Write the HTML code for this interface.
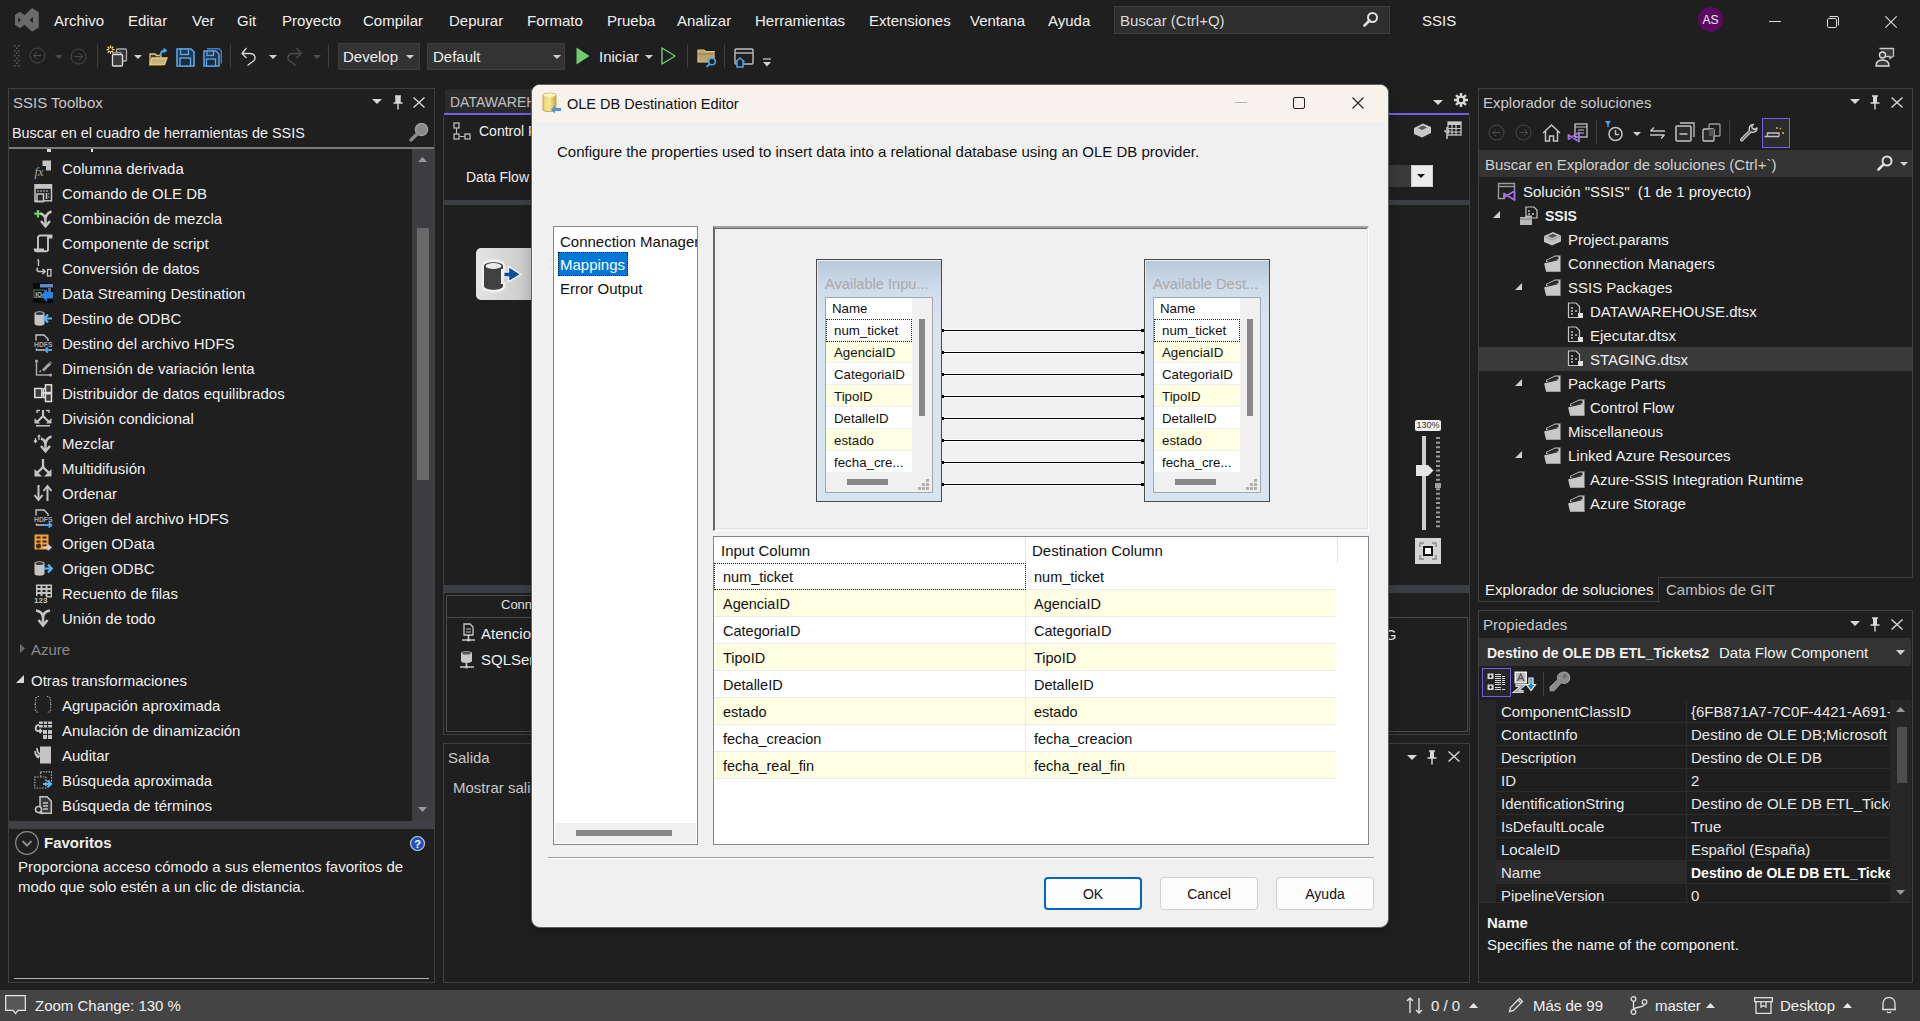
<!DOCTYPE html>
<html><head><meta charset="utf-8">
<style>
*{box-sizing:border-box;margin:0;padding:0}
html,body{width:1920px;height:1021px;overflow:hidden;background:#1f1f1f;font-family:"Liberation Sans",sans-serif;color:#f0f0f0}
.a{position:absolute;white-space:nowrap}
.t15{font-size:15px;line-height:18px}
.t14{font-size:14px;line-height:17px}
.w{color:#f0f0f0}
.g{color:#c8c8c8}
svg{position:absolute;overflow:visible}
</style></head><body>
<!-- ============ MENU BAR ============ -->
<svg style="left:0;top:0" width="44" height="40" viewBox="0 0 44 40"><path d="M15 15 L20 11.7 L24.6 15.3 L32.1 8.1 L38.8 12.2 V27.5 L32.1 31.7 L24.6 24.8 L20 28.3 L15 24.8 Z M18.3 17.2 L20.8 20 L18.3 22.8 Z M32.9 16.9 L29.6 20 L32.9 23.1 Z" fill="#6a6a6a" fill-rule="evenodd"/></svg>
<div id="menu">
<div class="a t15 w" style="left:54px;top:12px">Archivo</div>
<div class="a t15 w" style="left:128px;top:12px">Editar</div>
<div class="a t15 w" style="left:192px;top:12px">Ver</div>
<div class="a t15 w" style="left:237px;top:12px">Git</div>
<div class="a t15 w" style="left:282px;top:12px">Proyecto</div>
<div class="a t15 w" style="left:363px;top:12px">Compilar</div>
<div class="a t15 w" style="left:449px;top:12px">Depurar</div>
<div class="a t15 w" style="left:527px;top:12px">Formato</div>
<div class="a t15 w" style="left:607px;top:12px">Prueba</div>
<div class="a t15 w" style="left:677px;top:12px">Analizar</div>
<div class="a t15 w" style="left:755px;top:12px">Herramientas</div>
<div class="a t15 w" style="left:869px;top:12px">Extensiones</div>
<div class="a t15 w" style="left:970px;top:12px">Ventana</div>
<div class="a t15 w" style="left:1048px;top:12px">Ayuda</div>
</div>
<div class="a" style="left:1114px;top:6px;width:276px;height:28px;background:#2e2e2e;border:1px solid #3d3d3d"></div>
<div class="a t15" style="left:1120px;top:12px;color:#dcdcdc">Buscar (Ctrl+Q)</div>
<svg style="left:1363px;top:11px" width="16" height="16" viewBox="0 0 16 16"><circle cx="9.5" cy="6.5" r="4.5" fill="none" stroke="#e0e0e0" stroke-width="2"/><path d="M6.5 9.5 L1.5 14.5" stroke="#e0e0e0" stroke-width="2.6" stroke-linecap="round"/></svg>
<div class="a t15 w" style="left:1422px;top:12px">SSIS</div>
<div class="a" style="left:1698px;top:7px;width:25px;height:25px;border-radius:50%;background:#5a0b60"></div>
<div class="a" style="left:1698px;top:13px;width:25px;text-align:center;font-size:12px;line-height:14px;color:#f0f0f0">AS</div>
<div class="a" style="left:1769px;top:21px;width:12px;height:1px;background:#e0e0e0"></div>
<svg style="left:1826px;top:15px" width="14" height="14" viewBox="0 0 14 14"><rect x="1.5" y="3.5" width="9" height="9" rx="1.2" fill="none" stroke="#e0e0e0" stroke-width="1"/><path d="M3.5 1.5 H11 A1.5 1.5 0 0 1 12.5 3 V10.5" fill="none" stroke="#e0e0e0" stroke-width="1"/></svg>
<svg style="left:1885px;top:16px" width="12" height="12" viewBox="0 0 12 12"><path d="M0.3 0.3 L11.7 11.7 M11.7 0.3 L0.3 11.7" stroke="#e0e0e0" stroke-width="1.1"/></svg>


<!-- ============ TOOLBAR ============ -->
<svg style="left:13px;top:45px" width="8" height="23" viewBox="0 0 8 23"><g fill="#5a5a5a"><rect x="1" y="0" width="1.5" height="1.5"/><rect x="5" y="0" width="1.5" height="1.5"/><rect x="3" y="2.5" width="1.5" height="1.5"/><rect x="1" y="5" width="1.5" height="1.5"/><rect x="5" y="5" width="1.5" height="1.5"/><rect x="3" y="7.5" width="1.5" height="1.5"/><rect x="1" y="10" width="1.5" height="1.5"/><rect x="5" y="10" width="1.5" height="1.5"/><rect x="3" y="12.5" width="1.5" height="1.5"/><rect x="1" y="15" width="1.5" height="1.5"/><rect x="5" y="15" width="1.5" height="1.5"/><rect x="3" y="17.5" width="1.5" height="1.5"/><rect x="1" y="20" width="1.5" height="1.5"/><rect x="5" y="20" width="1.5" height="1.5"/></g></svg>
<svg style="left:29px;top:47px" width="17" height="17" viewBox="0 0 17 17"><circle cx="8.5" cy="8.5" r="7.5" fill="none" stroke="#4a4a4a" stroke-width="1"/><path d="M12.5 8.5 H4.5 M8 5 L4.5 8.5 L8 12" fill="none" stroke="#4a4a4a" stroke-width="1"/></svg>
<svg style="left:55px;top:55px" width="8" height="4" viewBox="0 0 8 4"><path d="M0 0 H8 L4 4 Z" fill="#4a4a4a"/></svg>
<svg style="left:70px;top:48px" width="17" height="17" viewBox="0 0 17 17"><circle cx="8.5" cy="8.5" r="7.5" fill="none" stroke="#4a4a4a" stroke-width="1"/><path d="M4.5 8.5 H12.5 M9 5 L12.5 8.5 L9 12" fill="none" stroke="#4a4a4a" stroke-width="1"/></svg>
<div class="a" style="left:97px;top:44px;width:1px;height:24px;background:#3d3d3d"></div>
<svg style="left:106px;top:45px" width="22" height="22" viewBox="0 0 22 22"><g stroke="#ecd48c" stroke-width="1.3"><path d="M4.5 0.5 V9 M0.5 4.7 H8.5 M1.7 1.7 L7.3 7.7 M7.3 1.7 L1.7 7.7"/></g><circle cx="4.5" cy="4.7" r="1.6" fill="#1f1f1f"/><rect x="10.5" y="4" width="10" height="12" rx="1" fill="#333" stroke="#aaa" stroke-width="1.3"/><rect x="7" y="7.5" width="8" height="10" fill="none" stroke="#999" stroke-width="1.3"/><rect x="6.5" y="9.5" width="10" height="11.5" rx="1" fill="#3a3a3a" stroke="#ddd" stroke-width="1.3"/></svg>
<svg style="left:134px;top:55px" width="8" height="4" viewBox="0 0 8 4"><path d="M0 0 H8 L4 4 Z" fill="#d0d0d0"/></svg>
<svg style="left:149px;top:47px" width="19" height="19" viewBox="0 0 19 19"><path d="M1 7 H6 L7.5 8.5 H12 V17.5 H1 Z" fill="#3c3a30" stroke="#e5c97e" stroke-width="1.3"/><path d="M3 11 H18 L15.5 17.5 H1 Z" fill="#c9b27a" stroke="#e5c97e" stroke-width="1.3"/><path d="M11.5 9 C11.5 5 13 3.5 16 3.5" fill="none" stroke="#4ea3ea" stroke-width="1.8"/><path d="M14.5 0.5 L18.5 3.5 L14.5 6.5 Z" fill="#4ea3ea"/></svg>
<svg style="left:176px;top:48px" width="19" height="19" viewBox="0 0 19 19"><path d="M1 1 H15 L18 4 V18 H1 Z" fill="#243445" stroke="#57a5ee" stroke-width="1.6"/><rect x="4.5" y="1" width="8" height="5.5" fill="#2a3a4a" stroke="#57a5ee" stroke-width="1.4"/><rect x="4" y="10" width="10.5" height="8" fill="#1f2a36" stroke="#57a5ee" stroke-width="1.4"/></svg>
<svg style="left:203px;top:48px" width="19" height="19" viewBox="0 0 19 19"><path d="M4 0.7 H16 L18.3 3 V15.5" fill="none" stroke="#3f7fc0" stroke-width="1.5"/><path d="M1 3 H13 L16 6 V18 H1 Z" fill="#243445" stroke="#57a5ee" stroke-width="1.5"/><rect x="4" y="3" width="6.5" height="4.5" fill="#2a3a4a" stroke="#57a5ee" stroke-width="1.3"/><rect x="3.5" y="11" width="9" height="7" fill="#1f2a36" stroke="#57a5ee" stroke-width="1.3"/></svg>
<div class="a" style="left:230px;top:44px;width:1px;height:24px;background:#3d3d3d"></div>
<svg style="left:241px;top:47px" width="17" height="19" viewBox="0 0 17 19"><path d="M1.5 6.5 H9 C14 6.5 15.5 11 12.5 14 L6.5 18.5" fill="none" stroke="#d8d8d8" stroke-width="1.3"/><path d="M5.5 1 L1 6.5 L5.5 11" fill="none" stroke="#d8d8d8" stroke-width="1.3"/></svg>
<svg style="left:269px;top:55px" width="8" height="4" viewBox="0 0 8 4"><path d="M0 0 H8 L4 4 Z" fill="#d0d0d0"/></svg>
<svg style="left:285px;top:47px" width="17" height="19" viewBox="0 0 17 19"><path d="M15.5 6.5 H8 C3 6.5 1.5 11 4.5 14 L10.5 18.5" fill="none" stroke="#4e4e4e" stroke-width="1.3"/><path d="M11.5 1 L16 6.5 L11.5 11" fill="none" stroke="#4e4e4e" stroke-width="1.3"/></svg>
<svg style="left:313px;top:55px" width="8" height="4" viewBox="0 0 8 4"><path d="M0 0 H8 L4 4 Z" fill="#4e4e4e"/></svg>
<div class="a" style="left:328px;top:44px;width:1px;height:24px;background:#3d3d3d"></div>
<div class="a" style="left:338px;top:43px;width:82px;height:27px;background:#333333;border:1px solid #3c3c3c"></div>
<div class="a t15 w" style="left:343px;top:48px">Develop</div>
<svg style="left:406px;top:55px" width="8" height="4" viewBox="0 0 8 4"><path d="M0 0 H8 L4 4 Z" fill="#d0d0d0"/></svg>
<div class="a" style="left:427px;top:43px;width:138px;height:27px;background:#333333;border:1px solid #3c3c3c"></div>
<div class="a t15 w" style="left:433px;top:48px">Default</div>
<svg style="left:553px;top:55px" width="8" height="4" viewBox="0 0 8 4"><path d="M0 0 H8 L4 4 Z" fill="#d0d0d0"/></svg>
<svg style="left:576px;top:47px" width="14" height="18" viewBox="0 0 14 18"><path d="M0.5 0.5 L13.5 9 L0.5 17.5 Z" fill="#6bcf6b"/></svg>
<div class="a t15 w" style="left:599px;top:48px">Iniciar</div>
<svg style="left:645px;top:55px" width="8" height="4" viewBox="0 0 8 4"><path d="M0 0 H8 L4 4 Z" fill="#d0d0d0"/></svg>
<svg style="left:661px;top:47px" width="15" height="18" viewBox="0 0 15 18"><path d="M1 1 L14 9 L1 17 Z" fill="none" stroke="#6bcf6b" stroke-width="1.4" stroke-linejoin="round"/></svg>
<div class="a" style="left:687px;top:44px;width:1px;height:24px;background:#3d3d3d"></div>
<svg style="left:697px;top:48px" width="21" height="20" viewBox="0 0 21 20"><path d="M1 2 H7 L8.5 3.5 H17 V14 H1 Z" fill="#b9a46c" stroke="#e5c97e" stroke-width="1.2"/><path d="M1 6 H17" stroke="#8c7a4a" stroke-width="1"/><circle cx="15" cy="13.5" r="3.3" fill="#1f1f1f" stroke="#4ea3ea" stroke-width="1.6"/><path d="M12.8 15.8 L9.5 19" stroke="#4ea3ea" stroke-width="1.8"/></svg>
<div class="a" style="left:724px;top:44px;width:1px;height:24px;background:#3d3d3d"></div>
<svg style="left:734px;top:48px" width="20" height="20" viewBox="0 0 20 20"><rect x="1" y="1" width="18" height="15" rx="1" fill="none" stroke="#bdbdbd" stroke-width="1.4"/><path d="M1 5 H19" stroke="#bdbdbd" stroke-width="1.4"/><path d="M1.5 14 L6 10 L10.5 14 M3 13 V19 H9 V13" fill="#1f1f1f" stroke="#4ea3ea" stroke-width="1.5"/></svg>
<svg style="left:762px;top:58px" width="10" height="9" viewBox="0 0 10 9"><path d="M1 1 H9" stroke="#d0d0d0" stroke-width="1.2"/><path d="M1 4 H9 L5 8.5 Z" fill="#d0d0d0"/></svg>
<svg style="left:1875px;top:47px" width="20" height="20" viewBox="0 0 20 20"><path d="M4.5 1.5 H18.5 V9 L15 11.5 V9.5 H10" fill="#3a3a3a" stroke="#c8c8c8" stroke-width="1.3"/><path d="M7.5 11 A3 3 0 1 0 7.5 5 A3 3 0 1 0 7.5 11 Z" fill="#3a3a3a" stroke="#e0e0e0" stroke-width="1.3"/><path d="M1 19 C1 15 3.5 13 7.5 13 C11.5 13 14 15 14 19 Z" fill="#3a3a3a" stroke="#e0e0e0" stroke-width="1.3"/></svg>


<!-- ============ LEFT PANEL ============ -->
<div class="a" style="left:8px;top:88px;width:427px;height:895px;border:1px solid #3f3f3f"></div>
<div class="a t15" style="left:13px;top:94px;color:#c8c8c8">SSIS Toolbox</div>
<svg style="left:372px;top:99px" width="10" height="5" viewBox="0 0 10 5"><path d="M0 0 H10 L5 5 Z" fill="#d8d8d8"/></svg>
<svg style="left:393px;top:95px" width="10" height="15" viewBox="0 0 10 15"><path d="M2 1 H8 M3 1 V7.5 M7 1 V7.5 M0.5 8 H9.5 M5 8 V14.5" fill="none" stroke="#d8d8d8" stroke-width="1.4"/><rect x="3" y="1" width="4" height="7" fill="#d8d8d8"/></svg>
<svg style="left:413px;top:97px" width="12" height="11" viewBox="0 0 12 11"><path d="M0.5 0.5 L11.5 10.5 M11.5 0.5 L0.5 10.5" stroke="#d8d8d8" stroke-width="1.4"/></svg>
<div class="a t15 w" style="left:12px;top:124px;font-size:14.4px">Buscar en el cuadro de herramientas de SSIS</div>
<svg style="left:409px;top:122px" width="20" height="20" viewBox="0 0 20 20"><circle cx="12.5" cy="7.5" r="6" fill="#8a8a8a" stroke="#9c9c9c" stroke-width="1.6"/><path d="M8 12 L2 18" stroke="#8a8a8a" stroke-width="3.4" stroke-linecap="round"/></svg>
<div class="a" style="left:9px;top:147px;width:425px;height:2px;background:#7a7a7a"></div>
<div class="a" style="left:412px;top:149px;width:22px;height:672px;background:#3e3e42"></div>
<div class="a" style="left:417px;top:228px;width:12px;height:252px;background:#686868"></div>
<svg style="left:418px;top:157px" width="9" height="5" viewBox="0 0 9 5"><path d="M0 5 L4.5 0 L9 5 Z" fill="#9a9a9a"/></svg>
<svg style="left:418px;top:807px" width="9" height="5" viewBox="0 0 9 5"><path d="M0 0 L4.5 5 L9 0 Z" fill="#9a9a9a"/></svg>
<div class="a" style="left:47px;top:149px;width:4px;height:3px;background:#d8d8d8"></div><div class="a" style="left:91px;top:149px;width:2px;height:3px;background:#e8e8e8"></div>
<svg style="left:34px;top:159px" width="18" height="18" viewBox="0 0 18 18"><path d="M8.5 1.5 H17 V11.5 H12 V7 H8.5 Z" fill="#c4c4c4"/><text x="0.5" y="17" font-family="Liberation Serif" font-style="italic" font-size="12.5" fill="#a8a8a8">fx</text></svg>
<div class="a t15 w" style="left:62px;top:160px">Columna derivada</div>
<svg style="left:34px;top:184px" width="18" height="18" viewBox="0 0 18 18"><rect x="1" y="0.8" width="16.5" height="16" fill="#262626" stroke="#c4c4c4" stroke-width="1.5"/><rect x="1" y="0.8" width="16.5" height="4" fill="#c4c4c4"/><path d="M3 7 H15" stroke="#c4c4c4" stroke-width="1.2" stroke-dasharray="2 1"/><path d="M12.5 9 V15 M14.5 9.5 V10.5 M14.5 12.5 V13.5" stroke="#c4c4c4" stroke-width="1.4"/><path d="M3 17.5 V10 H9.5 V17.5 Z" fill="#262626" stroke="#c4c4c4" stroke-width="1.5"/><path d="M0.5 17.5 H9.5" stroke="#c4c4c4" stroke-width="1.6"/></svg>
<div class="a t15 w" style="left:62px;top:185px">Comando de OLE DB</div>
<svg style="left:34px;top:209px" width="18" height="18" viewBox="0 0 18 18"><path d="M4 1 V8.5 M0.3 4.7 H7.7" stroke="#6fd36f" stroke-width="2.2"/><path d="M6.5 4.5 C8 5 11.5 7 11.5 11 M17.5 2.5 C16 3 11.5 5 11.5 11 V16.5" fill="none" stroke="#c4c4c4" stroke-width="2.4"/><path d="M7 12 L11.5 17.3 L16 12" fill="none" stroke="#c4c4c4" stroke-width="2.4"/></svg>
<div class="a t15 w" style="left:62px;top:210px">Combinación de mezcla</div>
<svg style="left:34px;top:234px" width="18" height="18" viewBox="0 0 18 18"><path d="M4 15.5 V3.5 C4 2 5 1.5 6.5 1.5 H17.5 V3.5 H14" fill="none" stroke="#c4c4c4" stroke-width="1.9"/><path d="M14 2 V15.5 C14 16.7 13.3 17.3 12 17.3 H2.5 C1.3 17.3 0.8 16.5 0.8 15.5 H10" fill="none" stroke="#c4c4c4" stroke-width="1.9"/></svg>
<div class="a t15 w" style="left:62px;top:235px">Componente de script</div>
<svg style="left:34px;top:259px" width="18" height="18" viewBox="0 0 18 18"><path d="M4.5 0.5 V7" stroke="#c4c4c4" stroke-width="1.4"/><path d="M3.5 1.5 L4.5 0.5" stroke="#c4c4c4" stroke-width="1.2"/><path d="M4 9 C2.5 10 2.5 12.5 5 12.5 H11 M8.5 10 L11 12.5 L8.5 15" fill="none" stroke="#c4c4c4" stroke-width="1.6"/><rect x="13.5" y="10.5" width="3.5" height="6.5" fill="none" stroke="#c4c4c4" stroke-width="1.3"/></svg>
<div class="a t15 w" style="left:62px;top:260px">Conversión de datos</div>
<svg style="left:34px;top:284px" width="18" height="18" viewBox="0 0 18 18"><rect x="-1" y="-1" width="20" height="20" fill="#0a0a0a"/><rect x="6" y="0" width="13" height="3.5" fill="#5d8ad0"/><rect x="0" y="6" width="11" height="7.5" fill="none" stroke="#4f7a6a" stroke-width="1"/><text x="1.3" y="12.5" font-size="6.5" font-weight="bold" fill="#c4c4c4" font-family="Liberation Sans">IO</text><rect x="14" y="4" width="3" height="4" fill="#666"/><path d="M19 8 H13 V5 L7 11.5 L13 18 V14.5 H19 Z" fill="#2f7fe8"/></svg>
<div class="a t15 w" style="left:62px;top:285px">Data Streaming Destination</div>
<svg style="left:34px;top:309px" width="18" height="18" viewBox="0 0 18 18"><path d="M0.5 4.5 C0.5 1.5 10.5 1.5 10.5 4.5 V14.5 C10.5 17.5 0.5 17.5 0.5 14.5 Z" fill="#c4c4c4"/><ellipse cx="5.5" cy="4.5" rx="4" ry="1.6" fill="#3a3a3a"/><path d="M18 9.5 H10.5 M14 5.5 L10.2 9.5 L14 13.5" fill="none" stroke="#5cb3f5" stroke-width="2.2"/></svg>
<div class="a t15 w" style="left:62px;top:310px">Destino de ODBC</div>
<svg style="left:34px;top:334px" width="18" height="18" viewBox="0 0 18 18"><path d="M2 6.5 V1 H10 L14 5 V7" fill="none" stroke="#c4c4c4" stroke-width="1.4"/><text x="0" y="13" font-size="6.8" font-weight="bold" fill="#a8a8a8" font-family="Liberation Sans">HDFS</text><path d="M2.5 14.5 V16 H11" stroke="#c4c4c4" stroke-width="1.4" fill="none"/><path d="M18 16 H11 M13.8 13.3 L11 16 L13.8 18.7" fill="none" stroke="#4ea3ea" stroke-width="1.8"/></svg>
<div class="a t15 w" style="left:62px;top:335px">Destino del archivo HDFS</div>
<svg style="left:34px;top:359px" width="18" height="18" viewBox="0 0 18 18"><path d="M2.5 2 V16 H17" fill="none" stroke="#a8a8a8" stroke-width="1.5"/><circle cx="2.5" cy="2" r="1.6" fill="#a8a8a8"/><circle cx="16.5" cy="16" r="1.6" fill="#a8a8a8"/><path d="M5.5 13 L7 11.5" stroke="#a8a8a8" stroke-width="1.5"/><path d="M8 10.5 L15 3.5 L17 5.5 L10 12.5 Z" fill="#a8a8a8"/><path d="M15.5 3 L16.3 2.2 L18 3.9 L17.3 4.7 Z" fill="#a8a8a8"/></svg>
<div class="a t15 w" style="left:62px;top:360px">Dimensión de variación lenta</div>
<svg style="left:34px;top:384px" width="18" height="18" viewBox="0 0 18 18"><rect x="0.8" y="4.5" width="7" height="9" fill="#3a3a3a" stroke="#e0e0e0" stroke-width="1.5"/><rect x="11.5" y="0.8" width="6" height="7.7" fill="#3a3a3a" stroke="#e0e0e0" stroke-width="1.5"/><rect x="11.5" y="9.8" width="6" height="7.7" fill="#3a3a3a" stroke="#e0e0e0" stroke-width="1.5"/><path d="M7.8 9 H11.5 M9.5 4.5 V13.5 H11.5 M9.5 4.5 H11.5" fill="none" stroke="#e0e0e0" stroke-width="1.5"/></svg>
<div class="a t15 w" style="left:62px;top:385px">Distribuidor de datos equilibrados</div>
<svg style="left:34px;top:409px" width="18" height="18" viewBox="0 0 18 18"><path d="M3 4 V1.5 H6 M15 4 V1.5 H12" fill="none" stroke="#c4c4c4" stroke-width="1.3"/><path d="M9 1 V7 L3 13 M9 7 L15 13" fill="none" stroke="#c4c4c4" stroke-width="2.2"/><path d="M0.5 9 V14.5 H6 Z M17.5 9 V14.5 H12 Z" fill="#c4c4c4"/><path d="M2 16.8 H16" stroke="#c4c4c4" stroke-width="1.5"/></svg>
<div class="a t15 w" style="left:62px;top:410px">División condicional</div>
<svg style="left:34px;top:434px" width="18" height="18" viewBox="0 0 18 18"><path d="M1.5 4 V8.5 M0 6.5 L1.5 8.5 L3 6.5 M5 1.5 V6" fill="none" stroke="#c4c4c4" stroke-width="1.3"/><path d="M3.7 3 L5 1.2 L6.3 3" fill="none" stroke="#c4c4c4" stroke-width="1.2"/><path d="M7 4.5 C8.5 5 11.5 7 11.5 11 M17.5 2.5 C16 3 11.5 5 11.5 11 V16.5" fill="none" stroke="#c4c4c4" stroke-width="2.4"/><path d="M7 12 L11.5 17.3 L16 12" fill="none" stroke="#c4c4c4" stroke-width="2.4"/></svg>
<div class="a t15 w" style="left:62px;top:435px">Mezclar</div>
<svg style="left:34px;top:459px" width="18" height="18" viewBox="0 0 18 18"><path d="M9 0 V7 C9 9 7 10 3 14 M9 7 C9 9 11 10 15 14" fill="none" stroke="#c4c4c4" stroke-width="2.3"/><path d="M0.5 10 V17.5 H8 Z M17.5 10 V17.5 H10 Z" fill="#c4c4c4"/></svg>
<div class="a t15 w" style="left:62px;top:460px">Multidifusión</div>
<svg style="left:34px;top:484px" width="18" height="18" viewBox="0 0 18 18"><path d="M4.5 1 V15" stroke="#c4c4c4" stroke-width="2"/><path d="M0.5 11 L4.5 16 L8.5 11" fill="none" stroke="#c4c4c4" stroke-width="2"/><path d="M13.5 17 V3" stroke="#c4c4c4" stroke-width="2"/><path d="M9.5 7 L13.5 2 L17.5 7" fill="none" stroke="#c4c4c4" stroke-width="2"/></svg>
<div class="a t15 w" style="left:62px;top:485px">Ordenar</div>
<svg style="left:34px;top:509px" width="18" height="18" viewBox="0 0 18 18"><path d="M2 6.5 V1 H10 L14 5 V7" fill="none" stroke="#c4c4c4" stroke-width="1.4"/><text x="0" y="13" font-size="6.8" font-weight="bold" fill="#a8a8a8" font-family="Liberation Sans">HDFS</text><path d="M2.5 14.5 V16 H10" stroke="#c4c4c4" stroke-width="1.4" fill="none"/><path d="M10 16 H17.5 M14.7 13.3 L17.5 16 L14.7 18.7" fill="none" stroke="#4ea3ea" stroke-width="1.8"/></svg>
<div class="a t15 w" style="left:62px;top:510px">Origen del archivo HDFS</div>
<svg style="left:34px;top:534px" width="18" height="18" viewBox="0 0 18 18"><rect x="0.5" y="0.5" width="14" height="15" fill="#f0a040"/><g fill="#3a2a10"><rect x="2.5" y="2.5" width="4" height="2"/><rect x="8.5" y="2.5" width="4" height="2"/><rect x="2.5" y="6.5" width="4" height="2"/><rect x="8.5" y="6.5" width="4" height="2"/><rect x="8.5" y="10.5" width="4" height="2"/><circle cx="4.5" cy="12" r="2.5"/></g><path d="M9 13.5 H16 M13.5 11 L16.5 13.5 L13.5 16" fill="none" stroke="#d0d0d0" stroke-width="2"/></svg>
<div class="a t15 w" style="left:62px;top:535px">Origen OData</div>
<svg style="left:34px;top:559px" width="18" height="18" viewBox="0 0 18 18"><path d="M0.5 4.5 C0.5 1.5 10.5 1.5 10.5 4.5 V14.5 C10.5 17.5 0.5 17.5 0.5 14.5 Z" fill="#c4c4c4"/><ellipse cx="5.5" cy="4.5" rx="4" ry="1.6" fill="#3a3a3a"/><path d="M10 9.5 H17.5 M14 5.5 L17.8 9.5 L14 13.5" fill="none" stroke="#5cb3f5" stroke-width="2.2"/></svg>
<div class="a t15 w" style="left:62px;top:560px">Origen ODBC</div>
<svg style="left:34px;top:584px" width="18" height="18" viewBox="0 0 18 18"><rect x="2" y="0.5" width="16" height="13" fill="#c4c4c4"/><g fill="#1f1f1f"><rect x="3.5" y="2" width="3" height="2"/><rect x="8.5" y="2" width="3" height="2"/><rect x="13.5" y="2" width="3" height="2"/><rect x="3.5" y="6" width="3" height="2"/><rect x="8.5" y="6" width="3" height="2"/><rect x="13.5" y="6" width="3" height="2"/><rect x="3.5" y="10" width="3" height="2"/><rect x="8.5" y="10" width="3" height="2"/><rect x="13.5" y="10" width="3" height="2"/></g><rect x="0" y="12" width="12" height="7" fill="#1f1f1f"/><text x="0" y="18.5" font-size="8" font-weight="bold" fill="#c4c4c4" font-family="Liberation Sans">123</text></svg>
<div class="a t15 w" style="left:62px;top:585px">Recuento de filas</div>
<svg style="left:34px;top:609px" width="18" height="18" viewBox="0 0 18 18"><path d="M2 1.5 C5 2 9 4 9 9 M16 1.5 C13 2 9 4 9 9 V16" fill="none" stroke="#c4c4c4" stroke-width="2.6"/><path d="M4.5 11 L9 16.5 L13.5 11" fill="none" stroke="#c4c4c4" stroke-width="2.6"/></svg>
<div class="a t15 w" style="left:62px;top:610px">Unión de todo</div>
<svg style="left:20px;top:644px" width="5" height="9" viewBox="0 0 5 9"><path d="M0 0 L5 4.5 L0 9 Z" fill="#6a6a6a"/></svg>
<div class="a t15" style="left:31px;top:641px;color:#8a8a8a">Azure</div>
<svg style="left:16px;top:675px" width="8" height="8" viewBox="0 0 8 8"><path d="M8 0 V8 H0 Z" fill="#d8d8d8"/></svg>
<div class="a t15 w" style="left:31px;top:672px">Otras transformaciones</div>
<svg style="left:34px;top:696px" width="18" height="18" viewBox="0 0 18 18"><path d="M5 0.5 H3.5 L1.5 2.5 V7 L0.3 8 L1.5 9 V14.5 L3.5 16.5 H5 M13 0.5 H14.5 L16.5 2.5 V7 L17.7 8 L16.5 9 V14.5 L14.5 16.5 H13" fill="none" stroke="#b0b0b0" stroke-width="1.2" stroke-dasharray="1.3 1.4"/></svg>
<div class="a t15 w" style="left:62px;top:697px">Agrupación aproximada</div>
<svg style="left:34px;top:721px" width="18" height="18" viewBox="0 0 18 18"><rect x="5" y="0.5" width="13" height="6" fill="#c4c4c4"/><path d="M9.3 0.5 V6.5 M13.6 0.5 V6.5 M5 3.5 H18" stroke="#1f1f1f" stroke-width="1"/><rect x="9" y="9" width="9" height="9" fill="#c4c4c4"/><path d="M13.5 9 V18 M9 13.5 H18" stroke="#1f1f1f" stroke-width="1"/><path d="M5 4 C1 4 0.5 9.5 4 10 H7 M5.5 8 L7.5 10 L5.5 12" fill="none" stroke="#c4c4c4" stroke-width="1.8"/></svg>
<div class="a t15 w" style="left:62px;top:722px">Anulación de dinamización</div>
<svg style="left:34px;top:746px" width="18" height="18" viewBox="0 0 18 18"><rect x="6" y="0.5" width="11" height="17" fill="#c4c4c4"/><path d="M1 5 C1 8 3 10 6 10 M3 2 C3 6 5 8 7 8.5 M5 12 C3 11 1.5 9 1.5 7" fill="none" stroke="#c4c4c4" stroke-width="1.7"/></svg>
<div class="a t15 w" style="left:62px;top:747px">Auditar</div>
<svg style="left:34px;top:771px" width="18" height="18" viewBox="0 0 18 18"><rect x="6.5" y="0.8" width="11" height="9" fill="none" stroke="#b0b0b0" stroke-width="1.2" stroke-dasharray="1.4 1.3"/><rect x="0.8" y="6" width="11" height="11" fill="#1f1f1f" stroke="#b0b0b0" stroke-width="1.2" stroke-dasharray="1.4 1.3"/><path d="M9 13 H16.5 M13.5 9.8 L17 13 L13.5 16.2" fill="none" stroke="#5cb3f5" stroke-width="2.2"/></svg>
<div class="a t15 w" style="left:62px;top:772px">Búsqueda aproximada</div>
<svg style="left:34px;top:796px" width="18" height="18" viewBox="0 0 18 18"><path d="M6 0.8 H13 L17.3 5 V17.3 H6 Z" fill="#3a3a3a" stroke="#c4c4c4" stroke-width="1.5"/><path d="M9 7 H14 M9 10 H14 M9 13 H14" stroke="#c4c4c4" stroke-width="1.6"/><circle cx="4.5" cy="13.5" r="3" fill="#1f1f1f" stroke="#c4c4c4" stroke-width="1.6"/><path d="M6.5 15.5 L9 18" stroke="#c4c4c4" stroke-width="1.8"/></svg>
<div class="a t15 w" style="left:62px;top:797px">Búsqueda de términos</div>
<div class="a" style="left:9px;top:821px;width:425px;height:8px;background:#3e4045"></div>
<svg style="left:15px;top:831px" width="24" height="24" viewBox="0 0 24 24"><circle cx="12" cy="12" r="11.3" fill="none" stroke="#8a8a8a" stroke-width="1.2"/><path d="M7.5 10 L12 14.5 L16.5 10" fill="none" stroke="#8a8a8a" stroke-width="2"/></svg>
<div class="a w" style="left:44px;top:834px;font-size:15px;line-height:18px;font-weight:bold">Favoritos</div>
<svg style="left:410px;top:836px" width="15" height="15" viewBox="0 0 15 15"><circle cx="7.5" cy="7.5" r="7" fill="#2352c0" stroke="#c0c8d8" stroke-width="1.2"/><text x="7.5" y="11.5" text-anchor="middle" font-size="11" font-weight="bold" fill="#fff" font-family="Liberation Sans">?</text></svg>
<div class="a t15 w" style="left:18px;top:857px;line-height:20px;white-space:normal;width:400px">Proporciona acceso cómodo a sus elementos favoritos de modo que solo estén a un clic de distancia.</div>
<div class="a" style="left:14px;top:978px;width:415px;height:1px;background:#b0b0b0"></div>
<!-- ============ CENTER DOC ============ -->
<div class="a" style="left:445px;top:89px;width:100px;height:24px;background:#2b2b2b"></div>
<div class="a t15" style="left:450px;top:93px;font-size:14px;color:#c0c0c0">DATAWAREHOUSE</div>
<div class="a" style="left:1433px;top:100px;width:0;height:0;border-left:5px solid transparent;border-right:5px solid transparent;border-top:5px solid #d8d8d8"></div>
<svg style="left:1454px;top:93px" width="14" height="14" viewBox="0 0 14 14"><g fill="#d8d8d8"><circle cx="7" cy="7" r="4.6"/><rect x="5.8" y="0" width="2.4" height="14"/><rect x="0" y="5.8" width="14" height="2.4"/><rect x="5.8" y="0" width="2.4" height="14" transform="rotate(45 7 7)"/><rect x="5.8" y="0" width="2.4" height="14" transform="rotate(-45 7 7)"/></g><circle cx="7" cy="7" r="2.2" fill="#1f1f1f"/></svg>
<div class="a" style="left:444px;top:113px;width:1025px;height:2px;background:#7160e8"></div>
<div class="a" style="left:443px;top:116px;width:1px;height:619px;background:#3f3f3f"></div>
<div class="a" style="left:1469px;top:115px;width:1px;height:620px;background:#3f3f3f"></div>
<svg style="left:453px;top:122px" width="19" height="19" viewBox="0 0 19 19"><rect x="1" y="1" width="5" height="5" fill="none" stroke="#bbb" stroke-width="1.3"/><rect x="1" y="12" width="5" height="5" fill="none" stroke="#bbb" stroke-width="1.3"/><rect x="12" y="12" width="5" height="5" fill="none" stroke="#bbb" stroke-width="1.3"/><path d="M3.5 6 V12 M12 14.5 H7" stroke="#bbb" stroke-width="1.1"/></svg>
<div class="a t14 w" style="left:479px;top:123px">Control Flow</div>
<div class="a t14 w" style="left:466px;top:169px">Data Flow Task</div>
<svg style="left:1413px;top:122px" width="19" height="17" viewBox="0 0 19 17"><path d="M1 6 L10 1.5 L18 5 V11 L9 15.5 L1 12 Z" fill="#c8c8c8"/><path d="M5 6 L10 3.5 L14 5.5 L9 8 Z" fill="#555"/></svg>
<svg style="left:1444px;top:121px" width="18" height="19" viewBox="0 0 18 19"><rect x="4" y="1" width="13" height="13" fill="none" stroke="#c8c8c8" stroke-width="1.3"/><rect x="4" y="1" width="13" height="3" fill="#c8c8c8"/><path d="M8 4 V14 M12 4 V14 M4 7.5 H17 M4 11 H17" stroke="#c8c8c8" stroke-width="1.2"/><path d="M3 6 V10 M1 9 C1 12 5 12 5 9 M3 12 V18" fill="none" stroke="#c8c8c8" stroke-width="1.5"/></svg>
<div class="a" style="left:1388px;top:165px;width:23px;height:22px;background:#3a3a3a"></div>
<div class="a" style="left:1411px;top:165px;width:22px;height:22px;background:#ececec;border:1px solid #cfcfcf"></div>
<div class="a" style="left:1417px;top:174px;width:0;height:0;border-left:4px solid transparent;border-right:4px solid transparent;border-top:4px solid #111"></div>
<div class="a" style="left:444px;top:200px;width:1026px;height:5px;background:#3b3e43"></div>
<div class="a" style="left:476px;top:248px;width:80px;height:52px;border-radius:5px;background:linear-gradient(90deg,#e4e4e4,#bcbcbc)"></div>
<svg style="left:480px;top:256px" width="44" height="36" viewBox="0 0 44 36"><path d="M3 10 C3 3 24 3 24 10 V13 H22 V28 H24 V30 C24 37 3 37 3 30 Z" fill="#f0f0f0" stroke="#f0f0f0" stroke-width="3"/><path d="M4 10 C4 5 23 5 23 10 V13 H21 V28 H23 V30 C23 35 4 35 4 30 Z" fill="#404040"/><ellipse cx="13.5" cy="10" rx="8" ry="3" fill="#ececec"/><path d="M23.7 16 H28.5 V10.4 L40.8 18.3 L28.5 26 V21 H23.7 Z" fill="#0b4f9c" stroke="#f0f0f0" stroke-width="1.5" stroke-linejoin="round"/></svg>
<div class="a" style="left:444px;top:585px;width:1026px;height:8px;background:#3b3e43"></div>
<div class="a" style="left:446px;top:595px;width:900px;height:23px;border:1px solid #4a4a4a;border-bottom:none"></div>
<div class="a" style="left:446px;top:617px;width:1022px;height:115px;border:1px solid #4a4a4a"></div>
<div class="a" style="left:501px;top:597px;font-size:13px;line-height:16px;color:#e0e0e0">Connection Managers</div>
<svg style="left:461px;top:623px" width="14" height="20" viewBox="0 0 14 20"><path d="M3 1 H9 L12 4 V12 H3 Z" fill="#1f1f1f" stroke="#c8c8c8" stroke-width="1.3"/><path d="M5 6 H10 M5 9 H10" stroke="#c8c8c8" stroke-width="1.2"/><path d="M7.5 12 V17 M1 17 H14" stroke="#c8c8c8" stroke-width="1.6"/><circle cx="7.5" cy="17" r="1.6" fill="#c8c8c8"/></svg>
<div class="a t15 w" style="left:481px;top:625px">AtencionClientes</div>
<svg style="left:459px;top:650px" width="16" height="20" viewBox="0 0 16 20"><path d="M2 3 C2 0.5 13 0.5 13 3 V11 C13 13.5 2 13.5 2 11 Z" fill="#c8c8c8"/><ellipse cx="7.5" cy="3" rx="4.3" ry="1.5" fill="#555"/><path d="M7.5 13 V17 M1 17 H15" stroke="#c8c8c8" stroke-width="1.6"/><circle cx="7.5" cy="17" r="1.6" fill="#c8c8c8"/></svg>
<div class="a t15 w" style="left:481px;top:651px">SQLServer</div>
<div class="a t15 w" style="left:1330px;top:626px">STAGING</div>
<div class="a" style="left:443px;top:734px;width:1027px;height:1px;background:#3f3f3f"></div>
<div class="a" style="left:443px;top:743px;width:1027px;height:240px;border:1px solid #3f3f3f"></div>
<div class="a t15" style="left:448px;top:749px;color:#c8c8c8">Salida</div>
<div class="a t15" style="left:453px;top:779px;color:#c8c8c8">Mostrar salida de:</div>
<div class="a" style="left:1407px;top:755px;width:0;height:0;border-left:5px solid transparent;border-right:5px solid transparent;border-top:5px solid #d8d8d8"></div>
<svg style="left:1427px;top:750px" width="10" height="15" viewBox="0 0 10 15"><path d="M2 1 H8 M0.5 8 H9.5 M5 8 V14.5" fill="none" stroke="#d8d8d8" stroke-width="1.4"/><rect x="3" y="1" width="4" height="7" fill="#d8d8d8"/></svg>
<svg style="left:1448px;top:751px" width="12" height="11" viewBox="0 0 12 11"><path d="M0.5 0.5 L11.5 10.5 M11.5 0.5 L0.5 10.5" stroke="#d8d8d8" stroke-width="1.4"/></svg>
<!-- zoom slider -->
<div class="a" style="left:1415px;top:420px;width:26px;height:11px;background:#f0f0f0;border-radius:2px;font-size:9px;line-height:11px;text-align:center;color:#333">130%</div>
<div class="a" style="left:1422px;top:436px;width:4px;height:94px;background:#cfcfcf"></div>
<svg style="left:1436px;top:437px" width="4" height="93" viewBox="0 0 4 93"><path d="M2 0 V93" stroke="#9a9a9a" stroke-width="4" stroke-dasharray="2 2.65"/></svg>
<div class="a" style="left:1435px;top:483px;width:6px;height:5px;background:#a0a0a0"></div>
<svg style="left:1416px;top:465px" width="18" height="11" viewBox="0 0 18 11"><path d="M0 0 H12 L17.5 5.5 L12 11 H0 Z" fill="#e6e6e6"/></svg>
<div class="a" style="left:1415px;top:538px;width:26px;height:26px;background:#d4d4d4"></div>
<svg style="left:1419px;top:542px" width="18" height="18" viewBox="0 0 18 18"><path d="M1 5 V1 H5 M13 1 H17 V5 M17 13 V17 H13 M5 17 H1 V13" fill="none" stroke="#8a8a8a" stroke-width="1.5"/><rect x="5" y="5" width="8" height="8" fill="#fff" stroke="#111" stroke-width="2"/></svg>

<!-- ============ RIGHT PANEL ============ -->
<div class="a" style="left:1478px;top:88px;width:435px;height:490px;border:1px solid #3f3f3f;border-bottom:none"></div>
<div class="a t15" style="left:1483px;top:94px;color:#c8c8c8">Explorador de soluciones</div>
<svg style="left:1850px;top:99px" width="10" height="5" viewBox="0 0 10 5"><path d="M0 0 H10 L5 5 Z" fill="#d8d8d8"/></svg>
<svg style="left:1870px;top:95px" width="10" height="15" viewBox="0 0 10 15"><path d="M2 1 H8 M0.5 8 H9.5 M5 8 V14.5" fill="none" stroke="#d8d8d8" stroke-width="1.4"/><rect x="3" y="1" width="4" height="7" fill="#d8d8d8"/></svg>
<svg style="left:1891px;top:97px" width="12" height="11" viewBox="0 0 12 11"><path d="M0.5 0.5 L11.5 10.5 M11.5 0.5 L0.5 10.5" stroke="#d8d8d8" stroke-width="1.4"/></svg>
<svg style="left:1488px;top:124px" width="17" height="17" viewBox="0 0 17 17"><circle cx="8.5" cy="8.5" r="7.5" fill="none" stroke="#4a4a4a"/><path d="M12.5 8.5 H4.5 M8 5 L4.5 8.5 L8 12" fill="none" stroke="#4a4a4a"/></svg>
<svg style="left:1515px;top:124px" width="17" height="17" viewBox="0 0 17 17"><circle cx="8.5" cy="8.5" r="7.5" fill="none" stroke="#4a4a4a"/><path d="M4.5 8.5 H12.5 M9 5 L12.5 8.5 L9 12" fill="none" stroke="#4a4a4a"/></svg>
<svg style="left:1542px;top:124px" width="19" height="18" viewBox="0 0 19 18"><path d="M1 9 L9.5 1 L18 9 M3.5 7 V17 H7.5 V12 H11.5 V17 H15.5 V7" fill="none" stroke="#c4c4c4" stroke-width="1.5"/></svg>
<svg style="left:1567px;top:123px" width="21" height="20" viewBox="0 0 21 20"><rect x="8" y="1" width="12" height="13" fill="#1f1f1f" stroke="#c4c4c4" stroke-width="1.3"/><path d="M8 4 H20 M11 7 H17 M11 10 H17" stroke="#c4c4c4" stroke-width="1.2"/><path d="M1.5 12 L12 18.5 V9.5 L1.5 16 Z" fill="none" stroke="#a070e0" stroke-width="1.9" stroke-linejoin="round"/></svg>
<div class="a" style="left:1596px;top:120px;width:1px;height:24px;background:#3d3d3d"></div>
<svg style="left:1605px;top:121px" width="19" height="22" viewBox="0 0 19 22"><path d="M0 0 H6 L3 4 Z" fill="#4ea3ea"/><path d="M3 3 V6" stroke="#4ea3ea" stroke-width="1.5"/><circle cx="10.5" cy="13" r="6.5" fill="none" stroke="#c4c4c4" stroke-width="1.5"/><path d="M10.5 9 V13.5 H14" fill="none" stroke="#c4c4c4" stroke-width="1.4"/></svg>
<svg style="left:1633px;top:132px" width="8" height="4" viewBox="0 0 8 4"><path d="M0 0 H8 L4 4 Z" fill="#d0d0d0"/></svg>
<svg style="left:1649px;top:126px" width="17" height="14" viewBox="0 0 17 14"><path d="M16 5 H1.5 M5 1.5 L1.5 5 M1 9 H15.5 M12 12.5 L15.5 9" fill="none" stroke="#c4c4c4" stroke-width="1.5"/></svg>
<svg style="left:1675px;top:122px" width="20" height="20" viewBox="0 0 20 20"><path d="M5 1 H19 V15" fill="none" stroke="#c4c4c4" stroke-width="1.3"/><rect x="1" y="4" width="15" height="15" rx="1" fill="#2a2a2a" stroke="#c4c4c4" stroke-width="1.5"/><path d="M4.5 12 H12.5" stroke="#c4c4c4" stroke-width="1.5"/></svg>
<svg style="left:1702px;top:123px" width="19" height="19" viewBox="0 0 19 19"><rect x="7" y="1" width="11" height="12" rx="1" fill="none" stroke="#9a9a9a" stroke-width="1.3"/><rect x="1" y="6" width="11" height="12" rx="1" fill="#2a2a2a" stroke="#c4c4c4" stroke-width="1.3"/><rect x="7" y="6" width="5" height="7" fill="#555"/></svg>
<div class="a" style="left:1729px;top:120px;width:1px;height:24px;background:#3d3d3d"></div>
<svg style="left:1739px;top:123px" width="19" height="20" viewBox="0 0 19 20"><path d="M14.5 1.5 C11 1.5 9.5 4.5 10.5 7.5 L2 16 C1 17 2.5 18.5 3.5 17.5 L12 9 C15 10 18 8.5 18 5 L15.5 6.5 L13 5 V2.5 Z" fill="#2a2a2a" stroke="#c4c4c4" stroke-width="1.5" stroke-linejoin="round"/></svg>
<div class="a" style="left:1762px;top:118px;width:28px;height:30px;background:#2b2b2b;border:1px solid #7160e8"></div>
<svg style="left:1764px;top:126px" width="22" height="12" viewBox="0 0 22 12"><path d="M0.5 10.5 H15 M3.5 10.5 V7 H15 V10.5" fill="none" stroke="#c4c4c4" stroke-width="1.3"/><path d="M13 1 V3 M16 3 L17 2 M18 7 H20" stroke="#e6c06a" stroke-width="1.3"/></svg>
<div class="a" style="left:1479px;top:150px;width:433px;height:27px;background:#333333"></div>
<div class="a t15" style="left:1485px;top:156px;color:#d0d0d0">Buscar en Explorador de soluciones (Ctrl+`)</div>
<svg style="left:1877px;top:155px" width="16" height="16" viewBox="0 0 16 16"><circle cx="10" cy="6" r="4.5" fill="none" stroke="#e0e0e0" stroke-width="2"/><path d="M6.8 9.2 L1.5 14.5" stroke="#e0e0e0" stroke-width="2.6" stroke-linecap="round"/></svg>
<svg style="left:1900px;top:162px" width="8" height="4" viewBox="0 0 8 4"><path d="M0 0 H8 L4 4 Z" fill="#d0d0d0"/></svg>
<div class="a" style="left:1479px;top:347px;width:433px;height:24px;background:#3a3a3a"></div>
<svg style="left:1497px;top:182px" width="19" height="19" viewBox="0 0 19 19"><path d="M8 16.5 H1.5 V1.5 H17.5 V8" fill="none" stroke="#9a9a9a" stroke-width="1.4"/><path d="M1.5 4.5 H17.5" stroke="#9a9a9a" stroke-width="1.4"/><path d="M7 11.5 L17.5 18 V9 L7 15.5 Z" fill="none" stroke="#a070e0" stroke-width="1.9" stroke-linejoin="round"/></svg>
<div class="a t15 w" style="left:1523px;top:183px;">Solución "SSIS"&nbsp; (1 de 1 proyecto)</div>
<svg style="left:1519px;top:206px" width="22" height="19" viewBox="0 0 22 19"><path d="M7 1 H15 L18 4 V12 H7 Z" fill="#1f1f1f" stroke="#c4c4c4" stroke-width="1.2"/><path d="M9 5 H11 M9 8 H11 M13 8 H15" stroke="#c4c4c4" stroke-width="1.5"/><path d="M1 11 H6 L7 9.5 H13 V19 H1 Z" fill="#b8b8b8"/><path d="M1 13 H13" stroke="#777" stroke-width="1"/></svg>
<div class="a t15 w" style="left:1545px;top:207px;font-weight:bold;font-size:14px;">SSIS</div>
<svg style="left:1493px;top:211px" width="7" height="7" viewBox="0 0 7 7"><path d="M7 0 V7 H0 Z" fill="#d0d0d0"/></svg>
<svg style="left:1543px;top:230px" width="19" height="19" viewBox="0 0 19 19"><path d="M1 6 L10 2 L18 5.5 V11.5 L9 15.5 L1 12 Z" fill="#c4c4c4"/><path d="M4.5 6 L10 3.8 L14.5 5.7 L9 8 Z" fill="#555"/><path d="M1 6.5 L9 10 L18 6" fill="none" stroke="#888" stroke-width="0.8"/></svg>
<div class="a t15 w" style="left:1568px;top:231px;">Project.params</div>
<svg style="left:1543px;top:254px" width="19" height="19" viewBox="0 0 19 19"><path d="M3 6 L12 1.5 H17.5 V17.5 H3 Z" fill="#c4c4c4"/><path d="M3.5 6.5 L12 2.5 H15.5 V5 L6 8.5 Z" fill="#2a2a2a"/><path d="M1 9 L14.5 6 L17.5 17.5 H3 Z" fill="#c8c8c8"/><path d="M1 9 L14.5 6" stroke="#1f1f1f" stroke-width="0.8"/></svg>
<div class="a t15 w" style="left:1568px;top:255px;">Connection Managers</div>
<svg style="left:1543px;top:278px" width="19" height="19" viewBox="0 0 19 19"><path d="M3 6 L12 1.5 H17.5 V17.5 H3 Z" fill="#c4c4c4"/><path d="M3.5 6.5 L12 2.5 H15.5 V5 L6 8.5 Z" fill="#2a2a2a"/><path d="M1 9 L14.5 6 L17.5 17.5 H3 Z" fill="#c8c8c8"/><path d="M1 9 L14.5 6" stroke="#1f1f1f" stroke-width="0.8"/></svg>
<div class="a t15 w" style="left:1568px;top:279px;">SSIS Packages</div>
<svg style="left:1515px;top:283px" width="7" height="7" viewBox="0 0 7 7"><path d="M7 0 V7 H0 Z" fill="#d0d0d0"/></svg>
<svg style="left:1567px;top:302px" width="19" height="19" viewBox="0 0 19 19"><path d="M1.5 1 H9 L12.5 4.5 V15.5 H1.5 Z" fill="#1f1f1f" stroke="#c4c4c4" stroke-width="1.2"/><path d="M4 6 H6 M4 9 H6 M8 9 H10 M4 12 H6" stroke="#c4c4c4" stroke-width="1.6"/><rect x="11" y="11" width="5" height="5" fill="#e0e0e0"/></svg>
<div class="a t15 w" style="left:1590px;top:303px;">DATAWAREHOUSE.dtsx</div>
<svg style="left:1567px;top:326px" width="19" height="19" viewBox="0 0 19 19"><path d="M1.5 1 H9 L12.5 4.5 V15.5 H1.5 Z" fill="#1f1f1f" stroke="#c4c4c4" stroke-width="1.2"/><path d="M4 6 H6 M4 9 H6 M8 9 H10 M4 12 H6" stroke="#c4c4c4" stroke-width="1.6"/><rect x="11" y="11" width="5" height="5" fill="#e0e0e0"/></svg>
<div class="a t15 w" style="left:1590px;top:327px;">Ejecutar.dtsx</div>
<svg style="left:1567px;top:350px" width="19" height="19" viewBox="0 0 19 19"><path d="M1.5 1 H9 L12.5 4.5 V15.5 H1.5 Z" fill="#1f1f1f" stroke="#c4c4c4" stroke-width="1.2"/><path d="M4 6 H6 M4 9 H6 M8 9 H10 M4 12 H6" stroke="#c4c4c4" stroke-width="1.6"/><rect x="11" y="11" width="5" height="5" fill="#e0e0e0"/></svg>
<div class="a t15 w" style="left:1590px;top:351px;">STAGING.dtsx</div>
<svg style="left:1543px;top:374px" width="19" height="19" viewBox="0 0 19 19"><path d="M3 6 L12 1.5 H17.5 V17.5 H3 Z" fill="#c4c4c4"/><path d="M3.5 6.5 L12 2.5 H15.5 V5 L6 8.5 Z" fill="#2a2a2a"/><path d="M1 9 L14.5 6 L17.5 17.5 H3 Z" fill="#c8c8c8"/><path d="M1 9 L14.5 6" stroke="#1f1f1f" stroke-width="0.8"/></svg>
<div class="a t15 w" style="left:1568px;top:375px;">Package Parts</div>
<svg style="left:1515px;top:379px" width="7" height="7" viewBox="0 0 7 7"><path d="M7 0 V7 H0 Z" fill="#d0d0d0"/></svg>
<svg style="left:1567px;top:398px" width="19" height="19" viewBox="0 0 19 19"><path d="M3 6 L12 1.5 H17.5 V17.5 H3 Z" fill="#c4c4c4"/><path d="M3.5 6.5 L12 2.5 H15.5 V5 L6 8.5 Z" fill="#2a2a2a"/><path d="M1 9 L14.5 6 L17.5 17.5 H3 Z" fill="#c8c8c8"/><path d="M1 9 L14.5 6" stroke="#1f1f1f" stroke-width="0.8"/></svg>
<div class="a t15 w" style="left:1590px;top:399px;">Control Flow</div>
<svg style="left:1543px;top:422px" width="19" height="19" viewBox="0 0 19 19"><path d="M3 6 L12 1.5 H17.5 V17.5 H3 Z" fill="#c4c4c4"/><path d="M3.5 6.5 L12 2.5 H15.5 V5 L6 8.5 Z" fill="#2a2a2a"/><path d="M1 9 L14.5 6 L17.5 17.5 H3 Z" fill="#c8c8c8"/><path d="M1 9 L14.5 6" stroke="#1f1f1f" stroke-width="0.8"/></svg>
<div class="a t15 w" style="left:1568px;top:423px;">Miscellaneous</div>
<svg style="left:1543px;top:446px" width="19" height="19" viewBox="0 0 19 19"><path d="M3 6 L12 1.5 H17.5 V17.5 H3 Z" fill="#c4c4c4"/><path d="M3.5 6.5 L12 2.5 H15.5 V5 L6 8.5 Z" fill="#2a2a2a"/><path d="M1 9 L14.5 6 L17.5 17.5 H3 Z" fill="#c8c8c8"/><path d="M1 9 L14.5 6" stroke="#1f1f1f" stroke-width="0.8"/></svg>
<div class="a t15 w" style="left:1568px;top:447px;">Linked Azure Resources</div>
<svg style="left:1515px;top:451px" width="7" height="7" viewBox="0 0 7 7"><path d="M7 0 V7 H0 Z" fill="#d0d0d0"/></svg>
<svg style="left:1567px;top:470px" width="19" height="19" viewBox="0 0 19 19"><path d="M3 6 L12 1.5 H17.5 V17.5 H3 Z" fill="#c4c4c4"/><path d="M3.5 6.5 L12 2.5 H15.5 V5 L6 8.5 Z" fill="#2a2a2a"/><path d="M1 9 L14.5 6 L17.5 17.5 H3 Z" fill="#c8c8c8"/><path d="M1 9 L14.5 6" stroke="#1f1f1f" stroke-width="0.8"/></svg>
<div class="a t15 w" style="left:1590px;top:471px;">Azure-SSIS Integration Runtime</div>
<svg style="left:1567px;top:494px" width="19" height="19" viewBox="0 0 19 19"><path d="M3 6 L12 1.5 H17.5 V17.5 H3 Z" fill="#c4c4c4"/><path d="M3.5 6.5 L12 2.5 H15.5 V5 L6 8.5 Z" fill="#2a2a2a"/><path d="M1 9 L14.5 6 L17.5 17.5 H3 Z" fill="#c8c8c8"/><path d="M1 9 L14.5 6" stroke="#1f1f1f" stroke-width="0.8"/></svg>
<div class="a t15 w" style="left:1590px;top:495px;">Azure Storage</div>
<div class="a" style="left:1478px;top:577px;width:181px;height:25px;border:1px solid #3f3f3f;border-top:none;background:#1f1f1f"></div>
<div class="a t15 w" style="left:1485px;top:581px">Explorador de soluciones</div>
<div class="a" style="left:1658px;top:577px;width:254px;height:1px;background:#3f3f3f"></div>
<div class="a t15" style="left:1666px;top:581px;color:#c0c0c0">Cambios de GIT</div>
<div class="a" style="left:1478px;top:610px;width:435px;height:373px;border:1px solid #3f3f3f"></div>
<div class="a t15" style="left:1483px;top:616px;color:#c8c8c8">Propiedades</div>
<svg style="left:1850px;top:621px" width="10" height="5" viewBox="0 0 10 5"><path d="M0 0 H10 L5 5 Z" fill="#d8d8d8"/></svg>
<svg style="left:1870px;top:617px" width="10" height="15" viewBox="0 0 10 15"><path d="M2 1 H8 M0.5 8 H9.5 M5 8 V14.5" fill="none" stroke="#d8d8d8" stroke-width="1.4"/><rect x="3" y="1" width="4" height="7" fill="#d8d8d8"/></svg>
<svg style="left:1891px;top:619px" width="12" height="11" viewBox="0 0 12 11"><path d="M0.5 0.5 L11.5 10.5 M11.5 0.5 L0.5 10.5" stroke="#d8d8d8" stroke-width="1.4"/></svg>
<div class="a" style="left:1479px;top:638px;width:432px;height:28px;background:#333333"></div>
<div class="a t15 w" style="left:1487px;top:644px;font-weight:bold;font-size:14px">Destino de OLE DB ETL_Tickets2</div>
<div class="a t15 w" style="left:1719px;top:644px">Data Flow Component</div>
<svg style="left:1896px;top:650px" width="9" height="5" viewBox="0 0 9 5"><path d="M0 0 H9 L4.5 5 Z" fill="#d0d0d0"/></svg>
<div class="a" style="left:1482px;top:668px;width:29px;height:29px;background:#262626;border:1px solid #7160e8"></div>
<svg style="left:1487px;top:673px" width="19" height="18" viewBox="0 0 19 18"><rect x="0.5" y="0.5" width="6" height="5.5" fill="#d8d8d8"/><rect x="0.5" y="11.5" width="6" height="5.5" fill="#d8d8d8"/><path d="M2 3.2 H5 M3.5 1.8 V4.7 M2 14.2 H5 M3.5 12.8 V15.7" stroke="#1f1f1f" stroke-width="1.1"/><g stroke="#d8d8d8" stroke-width="1"><path d="M8 1.5 H14 M8 3.5 H14 M8 5.5 H14 M8 7.5 H14 M8 9.5 H14 M8 11.5 H14 M8 14.5 H14 M8 16.5 H14"/><path d="M15 3.5 H18 M15 5.5 H18 M15 7.5 H18 M15 9.5 H18 M15 11.5 H18 M15 16.5 H18"/></g></svg>
<svg style="left:1514px;top:671px" width="22" height="22" viewBox="0 0 22 22"><rect x="0.5" y="0.5" width="12.5" height="12" fill="#f0f0f0"/><rect x="2" y="2" width="9.5" height="9" fill="#bcbcbc"/><path d="M3.5 10 L6.7 3 L10 10 M4.8 7.5 H8.6" fill="none" stroke="#555" stroke-width="1.3"/><path d="M1.5 14.5 H9 L2 20.5 H9.5" fill="none" stroke="#f0f0f0" stroke-width="3.2"/><path d="M1.5 14.5 H9 L2 20.5 H9.5" fill="none" stroke="#a0a0a0" stroke-width="1.6"/><path d="M15 7 V13.5 H12.5 L17 19.5 L21.5 13.5 H19 V7 Z" fill="#2a7fd0" stroke="#f0f0f0" stroke-width="1.2"/><path d="M17 8.5 V13" stroke="#9be05a" stroke-width="1.2"/></svg>
<div class="a" style="left:1543px;top:672px;width:1px;height:24px;background:#3d3d3d"></div>
<svg style="left:1549px;top:671px" width="22" height="22" viewBox="0 0 22 22"><path d="M15 1 C18.5 1 20.8 3.3 20.8 6.8 C20.8 10.3 18.5 12.5 15 12.5 C14 12.5 13 12.2 12.3 11.8 L5 19.8 H1 V16 L8.8 8.5 C8.5 7.9 8.3 7.3 8.3 6.8 C8.3 3.3 11.5 1 15 1 Z" fill="#8c8c8c" stroke="#b0b0b0" stroke-width="0.8"/><rect x="13.5" y="3.5" width="4" height="3.5" fill="#6e6e6e" transform="rotate(-45 15.5 5.2)"/></svg>
<div class="a" style="left:1479px;top:700px;width:17px;height:203px;background:#262626"></div>
<div class="a" style="left:1496px;top:700px;width:190px;height:22px;background:#1f1f1f"></div>
<div class="a" style="left:1496px;top:722px;width:394px;height:1px;background:#2c2c2c"></div>
<div class="a t15" style="left:1501px;top:703px;color:#e8e8e8">ComponentClassID</div>
<div class="a t15" style="left:1691px;top:703px;width:199px;overflow:hidden;color:#e8e8e8;">{6FB871A7-7C0F-4421-A691-C</div>
<div class="a" style="left:1496px;top:723px;width:190px;height:22px;background:#1f1f1f"></div>
<div class="a" style="left:1496px;top:745px;width:394px;height:1px;background:#2c2c2c"></div>
<div class="a t15" style="left:1501px;top:726px;color:#e8e8e8">ContactInfo</div>
<div class="a t15" style="left:1691px;top:726px;width:199px;overflow:hidden;color:#e8e8e8;">Destino de OLE DB;Microsoft C</div>
<div class="a" style="left:1496px;top:746px;width:190px;height:22px;background:#1f1f1f"></div>
<div class="a" style="left:1496px;top:768px;width:394px;height:1px;background:#2c2c2c"></div>
<div class="a t15" style="left:1501px;top:749px;color:#e8e8e8">Description</div>
<div class="a t15" style="left:1691px;top:749px;width:199px;overflow:hidden;color:#e8e8e8;">Destino de OLE DB</div>
<div class="a" style="left:1496px;top:769px;width:190px;height:22px;background:#1f1f1f"></div>
<div class="a" style="left:1496px;top:791px;width:394px;height:1px;background:#2c2c2c"></div>
<div class="a t15" style="left:1501px;top:772px;color:#e8e8e8">ID</div>
<div class="a t15" style="left:1691px;top:772px;width:199px;overflow:hidden;color:#e8e8e8;">2</div>
<div class="a" style="left:1496px;top:792px;width:190px;height:22px;background:#1f1f1f"></div>
<div class="a" style="left:1496px;top:814px;width:394px;height:1px;background:#2c2c2c"></div>
<div class="a t15" style="left:1501px;top:795px;color:#e8e8e8">IdentificationString</div>
<div class="a t15" style="left:1691px;top:795px;width:199px;overflow:hidden;color:#e8e8e8;">Destino de OLE DB ETL_Tickets2</div>
<div class="a" style="left:1496px;top:815px;width:190px;height:22px;background:#1f1f1f"></div>
<div class="a" style="left:1496px;top:837px;width:394px;height:1px;background:#2c2c2c"></div>
<div class="a t15" style="left:1501px;top:818px;color:#e8e8e8">IsDefaultLocale</div>
<div class="a t15" style="left:1691px;top:818px;width:199px;overflow:hidden;color:#e8e8e8;">True</div>
<div class="a" style="left:1496px;top:838px;width:190px;height:22px;background:#1f1f1f"></div>
<div class="a" style="left:1496px;top:860px;width:394px;height:1px;background:#2c2c2c"></div>
<div class="a t15" style="left:1501px;top:841px;color:#e8e8e8">LocaleID</div>
<div class="a t15" style="left:1691px;top:841px;width:199px;overflow:hidden;color:#e8e8e8;">Español (España)</div>
<div class="a" style="left:1496px;top:861px;width:190px;height:22px;background:#2b2b2b"></div>
<div class="a" style="left:1496px;top:883px;width:394px;height:1px;background:#2c2c2c"></div>
<div class="a t15" style="left:1501px;top:864px;color:#e8e8e8">Name</div>
<div class="a t15" style="left:1691px;top:864px;width:199px;overflow:hidden;color:#e8e8e8;font-weight:bold;color:#ffffff;font-size:14px;">Destino de OLE DB ETL_Tickets2</div>
<div class="a" style="left:1496px;top:884px;width:190px;height:22px;background:#1f1f1f"></div>
<div class="a" style="left:1496px;top:906px;width:394px;height:1px;background:#2c2c2c"></div>
<div class="a t15" style="left:1501px;top:887px;color:#e8e8e8">PipelineVersion</div>
<div class="a t15" style="left:1691px;top:887px;width:199px;overflow:hidden;color:#e8e8e8;">0</div>
<div class="a" style="left:1686px;top:700px;width:1px;height:203px;background:#2c2c2c"></div>
<div class="a" style="left:1479px;top:902px;width:433px;height:80px;background:#1f1f1f"></div>
<div class="a" style="left:1479px;top:902px;width:433px;height:1px;background:#2c2c2c"></div>
<div class="a" style="left:1890px;top:700px;width:21px;height:202px;background:#262626"></div>
<svg style="left:1896px;top:707px" width="9" height="5" viewBox="0 0 9 5"><path d="M0 5 L4.5 0 L9 5 Z" fill="#9a9a9a"/></svg>
<div class="a" style="left:1897px;top:727px;width:10px;height:56px;background:#4d4d4d"></div>
<svg style="left:1896px;top:890px" width="9" height="5" viewBox="0 0 9 5"><path d="M0 0 L4.5 5 L9 0 Z" fill="#9a9a9a"/></svg>
<div class="a w" style="left:1487px;top:914px;font-size:15px;line-height:18px;font-weight:bold">Name</div>
<div class="a t15 w" style="left:1487px;top:936px">Specifies the name of the component.</div>
<!-- ============ STATUS BAR ============ -->
<div class="a" style="left:0;top:990px;width:1920px;height:31px;background:#444444"></div>
<svg style="left:5px;top:995px" width="21" height="20" viewBox="0 0 21 20"><path d="M0.7 0.7 H20.3 V15.3 H13 L10.5 18.5 L8 15.3 H0.7 Z" fill="#575757" stroke="#e8e8e8" stroke-width="1.2"/></svg>
<div class="a t15 w" style="left:35px;top:997px">Zoom Change: 130 %</div>
<svg style="left:1406px;top:997px" width="17" height="17" viewBox="0 0 17 17"><path d="M4 16 V1 M1 4 L4 1 L7 4 M13 1 V16 M10 13 L13 16 L16 13" fill="none" stroke="#e0e0e0" stroke-width="1.4"/></svg>
<div class="a t15 w" style="left:1431px;top:997px">0 / 0</div>
<svg style="left:1469px;top:1003px" width="9" height="5" viewBox="0 0 9 5"><path d="M0 5 L4.5 0 L9 5 Z" fill="#e8e8e8"/></svg>
<svg style="left:1508px;top:997px" width="16" height="16" viewBox="0 0 16 16"><path d="M1.5 14.5 L2.5 10.5 L11.5 1.5 L14.5 4.5 L5.5 13.5 Z M10 3 L13 6" fill="none" stroke="#e0e0e0" stroke-width="1.3"/></svg>
<div class="a t15 w" style="left:1533px;top:997px">Más de 99</div>
<svg style="left:1630px;top:996px" width="18" height="19" viewBox="0 0 18 19"><circle cx="3.5" cy="3" r="2.3" fill="none" stroke="#e0e0e0" stroke-width="1.3"/><circle cx="3.5" cy="16" r="2.3" fill="none" stroke="#e0e0e0" stroke-width="1.3"/><circle cx="14.5" cy="6" r="2.3" fill="none" stroke="#e0e0e0" stroke-width="1.3"/><path d="M3.5 5.3 V13.7 M14.5 8.3 C14.5 12 4 10.5 3.5 13.5" fill="none" stroke="#e0e0e0" stroke-width="1.3"/></svg>
<div class="a t15 w" style="left:1655px;top:997px">master</div>
<svg style="left:1706px;top:1003px" width="9" height="5" viewBox="0 0 9 5"><path d="M0 5 L4.5 0 L9 5 Z" fill="#e8e8e8"/></svg>
<svg style="left:1754px;top:997px" width="19" height="17" viewBox="0 0 19 17"><rect x="0.7" y="0.7" width="17.6" height="4" fill="none" stroke="#e0e0e0" stroke-width="1.3"/><path d="M2 4.7 V16.3 H17 V4.7 M7 4.7 V10 L9.5 8.5 L12 10 V4.7" fill="none" stroke="#e0e0e0" stroke-width="1.3"/></svg>
<div class="a t15 w" style="left:1780px;top:997px">Desktop</div>
<svg style="left:1843px;top:1003px" width="9" height="5" viewBox="0 0 9 5"><path d="M0 5 L4.5 0 L9 5 Z" fill="#e8e8e8"/></svg>
<svg style="left:1881px;top:996px" width="16" height="18" viewBox="0 0 16 18"><path d="M2 13.5 V8 C2 4 4.5 1.5 8 1.5 C11.5 1.5 14 4 14 8 V13.5 H15 M1 13.5 H15" fill="none" stroke="#e0e0e0" stroke-width="1.3"/><path d="M6 15.5 C6.5 17 9.5 17 10 15.5" fill="none" stroke="#e0e0e0" stroke-width="1.3"/></svg>

<!-- ============ DIALOG ============ -->
<div class="a" style="left:531px;top:84px;width:858px;height:844px;border-radius:9px;background:#f0f0f0;overflow:hidden;border:1px solid #5e5e5e;box-shadow:inset 1px 0 0 #fafafa,0 4px 14px rgba(0,0,0,0.2)">
<div class="a" style="left:0;top:0;width:856px;height:37px;background:#f8f2ec"></div>
</div>
<svg style="left:542px;top:92px" width="20" height="22" viewBox="0 0 20 22"><defs><linearGradient id="cyl" x1="0" x2="1"><stop offset="0" stop-color="#e8d36a"/><stop offset="0.5" stop-color="#f6e79a"/><stop offset="1" stop-color="#c9a93a"/></linearGradient></defs><path d="M1 3 C1 0.5 14 0.5 14 3 V18 C14 20 1 20 1 18 Z" fill="url(#cyl)" stroke="#b8983a" stroke-width="0.8"/><ellipse cx="7.5" cy="3" rx="6.2" ry="1.8" fill="#fbf3c0"/><path d="M19 16 H13 V13.5 L9 17.5 L13 21.5 V19 H19 Z" fill="#5b8fd8"/></svg>
<div class="a" style="left:567px;top:95px;font-size:14.5px;line-height:18px;color:#111">OLE DB Destination Editor</div>
<div class="a" style="left:1235px;top:102px;width:12px;height:1px;background:#b5b5b5"></div>
<div class="a" style="left:1293px;top:97px;width:12px;height:12px;border:1.2px solid #222;border-radius:2px"></div>
<svg style="left:1352px;top:97px" width="12" height="12" viewBox="0 0 12 12"><path d="M0.5 0.5 L11.5 11.5 M11.5 0.5 L0.5 11.5" stroke="#222" stroke-width="1.1"/></svg>
<div class="a" style="left:557px;top:143px;font-size:15px;line-height:18px;color:#111">Configure the properties used to insert data into a relational database using an OLE DB provider.</div>
<div class="a" style="left:553px;top:226px;width:145px;height:619px;background:#fff;border:1px solid #828790;overflow:hidden">
<div class="a" style="left:6px;top:6px;font-size:15px;line-height:18px;color:#111">Connection Manager</div>
</div>
<div class="a" style="left:558px;top:252px;width:70px;height:24px;background:#0078d7;outline:1px dotted #111;outline-offset:-1px"></div>
<div class="a" style="left:560px;top:256px;font-size:15px;line-height:18px;color:#fff">Mappings</div>
<div class="a" style="left:560px;top:280px;font-size:15px;line-height:18px;color:#111">Error Output</div>
<div class="a" style="left:555px;top:823px;width:141px;height:20px;background:#f0f0f0"></div>
<div class="a" style="left:576px;top:830px;width:96px;height:6px;background:#888"></div>
<div class="a" style="left:713px;top:226px;width:656px;height:305px;border-top:2px solid #a0a0a0;border-left:2px solid #696969;border-right:1px solid #fff;border-bottom:1px solid #fff;background:#f0f0f0"></div>
<div class="a" style="left:715px;top:228px;width:653px;height:1px;background:#696969"></div>
<div class="a" style="left:1367px;top:228px;width:1px;height:301px;background:#e3e3e3"></div>
<div class="a" style="left:715px;top:528px;width:653px;height:1px;background:#e3e3e3"></div>
<div class="a" style="left:816px;top:259px;width:126px;height:243px;border:1px solid #4a4a4a;background:linear-gradient(180deg,#b8c9da 0px,#cfdcea 30px,#d8e4f0 60px,#d8e4f0 100%)"></div>
<div class="a" style="left:817px;top:260px;width:124px;height:241px;border:1px solid #e8eef6;border-bottom:none;border-right:none"></div>
<div class="a" style="left:825px;top:275px;font-size:14.6px;line-height:18px;color:#a9a9a9">Available Inpu...</div>
<div class="a" style="left:825px;top:297px;width:108px;height:196px;border:1px solid #a6a6a6;background:#f0f0f0"></div>
<div class="a" style="left:826px;top:298px;width:86px;height:174px;background:#fff;border-radius:0 0 3px 0"></div>
<div class="a" style="left:832px;top:301px;font-size:13.3px;line-height:16px;color:#111">Name</div>
<div class="a" style="left:826px;top:319px;width:86px;height:22px;background:#ffffff;border-bottom:1px solid #f0f0f0"></div>
<div class="a" style="left:834px;top:323px;font-size:13.3px;line-height:16px;color:#111">num_ticket</div>
<div class="a" style="left:826px;top:341px;width:86px;height:22px;background:#fefee2;border-bottom:1px solid #f0f0f0"></div>
<div class="a" style="left:834px;top:345px;font-size:13.3px;line-height:16px;color:#111">AgenciaID</div>
<div class="a" style="left:826px;top:363px;width:86px;height:22px;background:#ffffff;border-bottom:1px solid #f0f0f0"></div>
<div class="a" style="left:834px;top:367px;font-size:13.3px;line-height:16px;color:#111">CategoriaID</div>
<div class="a" style="left:826px;top:385px;width:86px;height:22px;background:#fefee2;border-bottom:1px solid #f0f0f0"></div>
<div class="a" style="left:834px;top:389px;font-size:13.3px;line-height:16px;color:#111">TipoID</div>
<div class="a" style="left:826px;top:407px;width:86px;height:22px;background:#ffffff;border-bottom:1px solid #f0f0f0"></div>
<div class="a" style="left:834px;top:411px;font-size:13.3px;line-height:16px;color:#111">DetalleID</div>
<div class="a" style="left:826px;top:429px;width:86px;height:22px;background:#fefee2;border-bottom:1px solid #f0f0f0"></div>
<div class="a" style="left:834px;top:433px;font-size:13.3px;line-height:16px;color:#111">estado</div>
<div class="a" style="left:826px;top:451px;width:86px;height:22px;background:#ffffff;border-bottom:1px solid #f0f0f0"></div>
<div class="a" style="left:834px;top:455px;font-size:13.3px;line-height:16px;color:#111">fecha_cre...</div>
<div class="a" style="left:826px;top:319px;width:86px;height:23px;outline:1px dotted #222;outline-offset:-1px"></div>
<div class="a" style="left:919px;top:319px;width:6px;height:97px;background:#878787"></div>
<div class="a" style="left:847px;top:479px;width:41px;height:6px;background:#878787"></div>
<svg style="left:918px;top:479px" width="12" height="12" viewBox="0 0 12 12"><g fill="#b0b0b0"><rect x="8" y="0" width="3" height="3"/><rect x="4" y="4" width="3" height="3"/><rect x="8" y="4" width="3" height="3"/><rect x="0" y="8" width="3" height="3"/><rect x="4" y="8" width="3" height="3"/><rect x="8" y="8" width="3" height="3"/></g></svg>
<div class="a" style="left:1144px;top:259px;width:126px;height:243px;border:1px solid #4a4a4a;background:linear-gradient(180deg,#b8c9da 0px,#cfdcea 30px,#d8e4f0 60px,#d8e4f0 100%)"></div>
<div class="a" style="left:1145px;top:260px;width:124px;height:241px;border:1px solid #e8eef6;border-bottom:none;border-right:none"></div>
<div class="a" style="left:1153px;top:275px;font-size:14.6px;line-height:18px;color:#a9a9a9">Available Dest...</div>
<div class="a" style="left:1153px;top:297px;width:108px;height:196px;border:1px solid #a6a6a6;background:#f0f0f0"></div>
<div class="a" style="left:1154px;top:298px;width:86px;height:174px;background:#fff;border-radius:0 0 3px 0"></div>
<div class="a" style="left:1160px;top:301px;font-size:13.3px;line-height:16px;color:#111">Name</div>
<div class="a" style="left:1154px;top:319px;width:86px;height:22px;background:#ffffff;border-bottom:1px solid #f0f0f0"></div>
<div class="a" style="left:1162px;top:323px;font-size:13.3px;line-height:16px;color:#111">num_ticket</div>
<div class="a" style="left:1154px;top:341px;width:86px;height:22px;background:#fefee2;border-bottom:1px solid #f0f0f0"></div>
<div class="a" style="left:1162px;top:345px;font-size:13.3px;line-height:16px;color:#111">AgenciaID</div>
<div class="a" style="left:1154px;top:363px;width:86px;height:22px;background:#ffffff;border-bottom:1px solid #f0f0f0"></div>
<div class="a" style="left:1162px;top:367px;font-size:13.3px;line-height:16px;color:#111">CategoriaID</div>
<div class="a" style="left:1154px;top:385px;width:86px;height:22px;background:#fefee2;border-bottom:1px solid #f0f0f0"></div>
<div class="a" style="left:1162px;top:389px;font-size:13.3px;line-height:16px;color:#111">TipoID</div>
<div class="a" style="left:1154px;top:407px;width:86px;height:22px;background:#ffffff;border-bottom:1px solid #f0f0f0"></div>
<div class="a" style="left:1162px;top:411px;font-size:13.3px;line-height:16px;color:#111">DetalleID</div>
<div class="a" style="left:1154px;top:429px;width:86px;height:22px;background:#fefee2;border-bottom:1px solid #f0f0f0"></div>
<div class="a" style="left:1162px;top:433px;font-size:13.3px;line-height:16px;color:#111">estado</div>
<div class="a" style="left:1154px;top:451px;width:86px;height:22px;background:#ffffff;border-bottom:1px solid #f0f0f0"></div>
<div class="a" style="left:1162px;top:455px;font-size:13.3px;line-height:16px;color:#111">fecha_cre...</div>
<div class="a" style="left:1154px;top:319px;width:86px;height:23px;outline:1px dotted #222;outline-offset:-1px"></div>
<div class="a" style="left:1247px;top:319px;width:6px;height:97px;background:#878787"></div>
<div class="a" style="left:1175px;top:479px;width:41px;height:6px;background:#878787"></div>
<svg style="left:1246px;top:479px" width="12" height="12" viewBox="0 0 12 12"><g fill="#b0b0b0"><rect x="8" y="0" width="3" height="3"/><rect x="4" y="4" width="3" height="3"/><rect x="8" y="4" width="3" height="3"/><rect x="0" y="8" width="3" height="3"/><rect x="4" y="8" width="3" height="3"/><rect x="8" y="8" width="3" height="3"/></g></svg>
<div class="a" style="left:942px;top:329px;width:202px;height:3px;background:#fff"></div>
<div class="a" style="left:942px;top:330px;width:202px;height:1px;background:#000"></div>
<div class="a" style="left:942px;top:329px;width:2px;height:3px;background:#000"></div>
<div class="a" style="left:1141px;top:329px;width:3px;height:3px;background:#000"></div>
<div class="a" style="left:942px;top:351px;width:202px;height:3px;background:#fff"></div>
<div class="a" style="left:942px;top:352px;width:202px;height:1px;background:#000"></div>
<div class="a" style="left:942px;top:351px;width:2px;height:3px;background:#000"></div>
<div class="a" style="left:1141px;top:351px;width:3px;height:3px;background:#000"></div>
<div class="a" style="left:942px;top:373px;width:202px;height:3px;background:#fff"></div>
<div class="a" style="left:942px;top:374px;width:202px;height:1px;background:#000"></div>
<div class="a" style="left:942px;top:373px;width:2px;height:3px;background:#000"></div>
<div class="a" style="left:1141px;top:373px;width:3px;height:3px;background:#000"></div>
<div class="a" style="left:942px;top:395px;width:202px;height:3px;background:#fff"></div>
<div class="a" style="left:942px;top:396px;width:202px;height:1px;background:#000"></div>
<div class="a" style="left:942px;top:395px;width:2px;height:3px;background:#000"></div>
<div class="a" style="left:1141px;top:395px;width:3px;height:3px;background:#000"></div>
<div class="a" style="left:942px;top:417px;width:202px;height:3px;background:#fff"></div>
<div class="a" style="left:942px;top:418px;width:202px;height:1px;background:#000"></div>
<div class="a" style="left:942px;top:417px;width:2px;height:3px;background:#000"></div>
<div class="a" style="left:1141px;top:417px;width:3px;height:3px;background:#000"></div>
<div class="a" style="left:942px;top:439px;width:202px;height:3px;background:#fff"></div>
<div class="a" style="left:942px;top:440px;width:202px;height:1px;background:#000"></div>
<div class="a" style="left:942px;top:439px;width:2px;height:3px;background:#000"></div>
<div class="a" style="left:1141px;top:439px;width:3px;height:3px;background:#000"></div>
<div class="a" style="left:942px;top:461px;width:202px;height:3px;background:#fff"></div>
<div class="a" style="left:942px;top:462px;width:202px;height:1px;background:#000"></div>
<div class="a" style="left:942px;top:461px;width:2px;height:3px;background:#000"></div>
<div class="a" style="left:1141px;top:461px;width:3px;height:3px;background:#000"></div>
<div class="a" style="left:942px;top:483px;width:202px;height:3px;background:#fff"></div>
<div class="a" style="left:942px;top:484px;width:202px;height:1px;background:#000"></div>
<div class="a" style="left:942px;top:483px;width:2px;height:3px;background:#000"></div>
<div class="a" style="left:1141px;top:483px;width:3px;height:3px;background:#000"></div>
<div class="a" style="left:713px;top:536px;width:656px;height:309px;background:#fff;border:1px solid #828790"></div>
<div class="a" style="left:1025px;top:537px;width:1px;height:26px;background:#e5e5e5"></div>
<div class="a" style="left:1337px;top:537px;width:1px;height:26px;background:#e5e5e5"></div>
<div class="a" style="left:721px;top:542px;font-size:15px;line-height:18px;color:#111">Input Column</div>
<div class="a" style="left:1032px;top:542px;font-size:15px;line-height:18px;color:#111">Destination Column</div>
<div class="a" style="left:714px;top:563px;width:622px;height:27px;background:#ffffff;border-bottom:1px solid #ececec"></div>
<div class="a" style="left:1025px;top:563px;width:1px;height:27px;background:#ececec"></div>
<div class="a" style="left:723px;top:568px;font-size:14.5px;line-height:18px;color:#111">num_ticket</div>
<div class="a" style="left:1034px;top:568px;font-size:14.5px;line-height:18px;color:#111">num_ticket</div>
<div class="a" style="left:714px;top:590px;width:622px;height:27px;background:#fefee2;border-bottom:1px solid #ececec"></div>
<div class="a" style="left:1025px;top:590px;width:1px;height:27px;background:#ececec"></div>
<div class="a" style="left:723px;top:595px;font-size:14.5px;line-height:18px;color:#111">AgenciaID</div>
<div class="a" style="left:1034px;top:595px;font-size:14.5px;line-height:18px;color:#111">AgenciaID</div>
<div class="a" style="left:714px;top:617px;width:622px;height:27px;background:#ffffff;border-bottom:1px solid #ececec"></div>
<div class="a" style="left:1025px;top:617px;width:1px;height:27px;background:#ececec"></div>
<div class="a" style="left:723px;top:622px;font-size:14.5px;line-height:18px;color:#111">CategoriaID</div>
<div class="a" style="left:1034px;top:622px;font-size:14.5px;line-height:18px;color:#111">CategoriaID</div>
<div class="a" style="left:714px;top:644px;width:622px;height:27px;background:#fefee2;border-bottom:1px solid #ececec"></div>
<div class="a" style="left:1025px;top:644px;width:1px;height:27px;background:#ececec"></div>
<div class="a" style="left:723px;top:649px;font-size:14.5px;line-height:18px;color:#111">TipoID</div>
<div class="a" style="left:1034px;top:649px;font-size:14.5px;line-height:18px;color:#111">TipoID</div>
<div class="a" style="left:714px;top:671px;width:622px;height:27px;background:#ffffff;border-bottom:1px solid #ececec"></div>
<div class="a" style="left:1025px;top:671px;width:1px;height:27px;background:#ececec"></div>
<div class="a" style="left:723px;top:676px;font-size:14.5px;line-height:18px;color:#111">DetalleID</div>
<div class="a" style="left:1034px;top:676px;font-size:14.5px;line-height:18px;color:#111">DetalleID</div>
<div class="a" style="left:714px;top:698px;width:622px;height:27px;background:#fefee2;border-bottom:1px solid #ececec"></div>
<div class="a" style="left:1025px;top:698px;width:1px;height:27px;background:#ececec"></div>
<div class="a" style="left:723px;top:703px;font-size:14.5px;line-height:18px;color:#111">estado</div>
<div class="a" style="left:1034px;top:703px;font-size:14.5px;line-height:18px;color:#111">estado</div>
<div class="a" style="left:714px;top:725px;width:622px;height:27px;background:#ffffff;border-bottom:1px solid #ececec"></div>
<div class="a" style="left:1025px;top:725px;width:1px;height:27px;background:#ececec"></div>
<div class="a" style="left:723px;top:730px;font-size:14.5px;line-height:18px;color:#111">fecha_creacion</div>
<div class="a" style="left:1034px;top:730px;font-size:14.5px;line-height:18px;color:#111">fecha_creacion</div>
<div class="a" style="left:714px;top:752px;width:622px;height:27px;background:#fefee2;border-bottom:1px solid #ececec"></div>
<div class="a" style="left:1025px;top:752px;width:1px;height:27px;background:#ececec"></div>
<div class="a" style="left:723px;top:757px;font-size:14.5px;line-height:18px;color:#111">fecha_real_fin</div>
<div class="a" style="left:1034px;top:757px;font-size:14.5px;line-height:18px;color:#111">fecha_real_fin</div>
<div class="a" style="left:714px;top:563px;width:312px;height:27px;outline:1px dotted #222;outline-offset:-1px"></div>
<div class="a" style="left:548px;top:857px;width:826px;height:1px;background:#a0a0a0"></div>
<div class="a" style="left:548px;top:858px;width:826px;height:1px;background:#fff"></div>
<div class="a" style="left:1044px;top:877px;width:98px;height:33px;background:#fdfdfd;border:2px solid #0067c0;border-radius:4px;font-size:14px;line-height:30px;text-align:center;color:#111">OK</div>
<div class="a" style="left:1160px;top:877px;width:98px;height:33px;background:#fdfdfd;border:1px solid #d0d0d0;border-radius:4px;font-size:14px;line-height:32px;text-align:center;color:#111">Cancel</div>
<div class="a" style="left:1276px;top:877px;width:98px;height:33px;background:#fdfdfd;border:1px solid #d0d0d0;border-radius:4px;font-size:14px;line-height:32px;text-align:center;color:#111">Ayuda</div>
</body></html>
